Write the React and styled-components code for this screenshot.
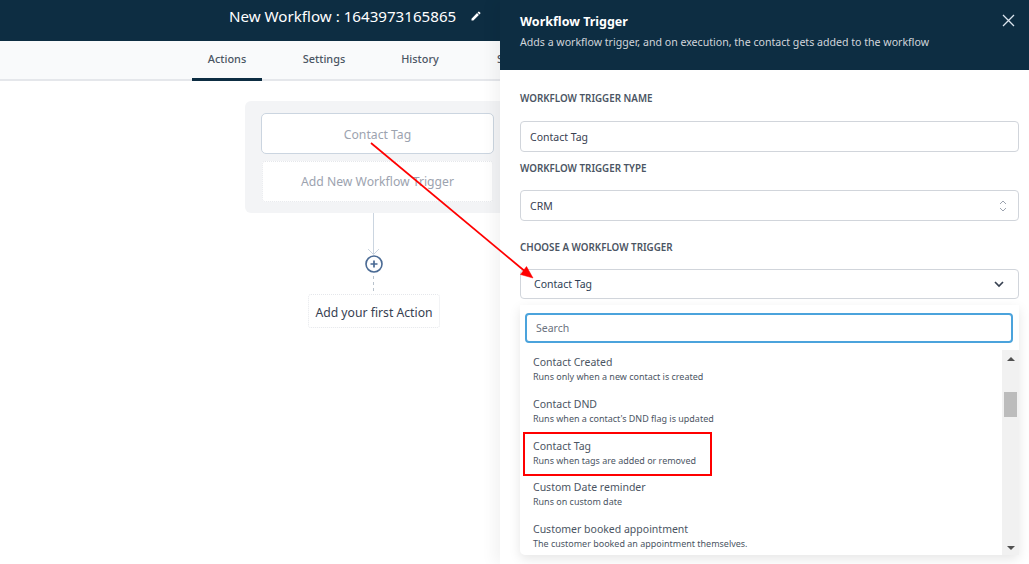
import React from "react";
import styled, { createGlobalStyle } from "styled-components";
import { MdEdit } from "react-icons/md";

const Global = createGlobalStyle`
  html, body { margin: 0; padding: 0; background: #fff; }
  body { font-family: "Noto Sans", "Open Sans", sans-serif; overflow: hidden; }
  * { box-sizing: border-box; }
`;
const Page = styled.div`position: relative; display: flex; width: 1029px; height: 564px; overflow: hidden; background: #fff;`;
const Main = styled.main`width: 500px; flex: none; overflow: hidden; display: flex; flex-direction: column;`;
const TopBar = styled.header`height: 41px; background: #0d2d42; color: #fff; display: flex; align-items: flex-start; padding: 6px 0 0 229px; gap: 14px; font-size: 15.15px; line-height: 20px; white-space: nowrap;`;
const PencilIcon = styled.span`display: flex; padding-top: 4px; font-size: 12px;`;
const Tabs = styled.nav`height: 40px; background: #f9fafb; border-bottom: 2px solid #e5e7eb; display: flex; padding-left: 192px; white-space: nowrap;`;
const Tab = styled.div`
  width: ${p => p.$w}px; flex: none; height: 40px; padding: 10px 0 0 ${p => p.$pl || 0}px; text-align: ${p => p.$pl ? "left" : "center"};
  font-size: 10.9px; line-height: 16px; font-weight: 500; color: #4b5563;
  border-bottom: 3px solid ${p => p.$active ? "#0d2d42" : "transparent"};
`;
const Canvas = styled.section`flex: 1; display: flex; flex-direction: column; padding: 20px 0 0 245px;`;
const TriggerBox = styled.div`width: 275px; height: 112px; flex: none; background: #f3f4f6; border-radius: 6px; padding: 12px 0 0 16px; display: flex; flex-direction: column;`;
const TriggerCard = styled.div`width: 233px; height: 41px; background: #fff; border: 1px solid #cbd5e0; border-radius: 5px; padding-top: 1px; display: flex; align-items: center; justify-content: center; font-size: 12.2px; color: #9ca3af;`;
const AddTrigger = styled.div`width: 231px; height: 41px; margin: 7px 0 0 1px; background: #fff; border: 1px dotted #e5e7eb; border-radius: 3px; display: flex; align-items: center; justify-content: center; font-size: 12.2px; color: #9ca3af;`;
const FlowColumn = styled.div`width: 132px; margin-left: 63px; display: flex; flex-direction: column; align-items: center; flex: none;`;
const Connector = styled.svg`display: block; flex: none;`;
const FirstAction = styled.div`width: 132px; height: 34px; flex: none; padding-top: 2px; border: 1px dotted #e5e7eb; border-radius: 3px; display: flex; align-items: center; justify-content: center; font-size: 12.2px; color: #374151; white-space: nowrap;`;

const Drawer = styled.aside`width: 529px; flex: none; height: 564px; background: #fff; box-shadow: -6px 0 14px rgba(0,0,0,.05); position: relative; z-index: 1;`;
const DrawerHead = styled.header`height: 70px; background: #0d2d42; color: #fff; padding: 13px 20px 0; display: flex; justify-content: space-between;`;
const Title = styled.h2`margin: 0; font-size: 12.5px; line-height: 17px; font-weight: 700;`;
const Sub = styled.p`margin: 5px 0 0; font-size: 10.6px; line-height: 15px; color: #d1d5db; white-space: nowrap;`;
const CloseBtn = styled.svg`display: block; margin: 1px -6px 0 0;`;
const Body = styled.div`padding: 0 10px 0 20px;`;
const Label = styled.div`font-size: 9.8px; line-height: 14px; font-weight: 600; color: #4b5563; white-space: nowrap; padding-top: ${p => p.$top}px; padding-bottom: ${p => p.$bottom}px;`;
const Field = styled.div`height: ${p => p.$h || 31}px; width: 499px; border: 1px solid #d1d5db; border-radius: 4px; display: flex; align-items: center; justify-content: space-between; padding: 0 ${p => p.$pr || 10}px 0 ${p => p.$pl || 9}px; font-size: 10.5px; color: ${p => p.$dark || "#374151"}; background: #fff;`;
const Dropdown = styled.div`width: 499px; height: 250px; margin-top: 6px; background: #fff; border-radius: 0 0 5px 5px; box-shadow: 0 4px 12px rgba(0,0,0,.1); position: relative;`;
const Search = styled.div`position: absolute; left: 5px; top: 8px; width: 488px; height: 30px; border: 2px solid #4ba3dc; border-radius: 4px; padding: 0 9px; display: flex; align-items: center; font-size: 10.5px; color: #6b7280; background: #fff;`;
const List = styled.ul`list-style: none; margin: 0; padding: 50px 0 0 13px;`;
const Item = styled.li`height: ${p => p.$h || 42}px;`;
const ItemTitle = styled.div`font-size: 10.5px; line-height: 15px; color: #4b5563; white-space: nowrap;`;
const ItemDesc = styled.div`font-size: 8.97px; line-height: 14px; color: #4b5563; white-space: nowrap;`;
const Scrollbar = styled.div`position: absolute; right: 0; top: 45px; bottom: 0; width: 17px; background: #f1f1f1; display: flex; flex-direction: column; align-items: center; justify-content: space-between; padding: 7px 0 5px;`;
const Thumb = styled.div`position: absolute; left: 2px; top: 42px; width: 13px; height: 25px; background: #bcbcbc;`;
const ArrowUp = styled.div`width: 0; height: 0; border: 4px solid transparent; border-top: 0; border-bottom: 4px solid #505050;`;
const ArrowDown = styled.div`width: 0; height: 0; border: 4px solid transparent; border-bottom: 0; border-top: 4px solid #505050;`;
const Highlight = styled.div`position: absolute; left: 523px; top: 432px; width: 189px; height: 44px; border: 2px solid #f00; pointer-events: none; z-index: 3;`;
const ArrowOverlay = styled.svg`position: absolute; left: 0; top: 0; pointer-events: none; z-index: 3;`;

const items = [
  ["Contact Created", "Runs only when a new contact is created", 42],
  ["Contact DND", "Runs when a contact's DND flag is updated", 42],
  ["Contact Tag", "Runs when tags are added or removed", 41],
  ["Custom Date reminder", "Runs on custom date", 42],
  ["Customer booked appointment", "The customer booked an appointment themselves.", 40],
];

export default function App() {
  return (
    <Page>
      <Global />
      <Main>
        <TopBar>
          <span>New Workflow : 1643973165865</span>
          <PencilIcon><MdEdit /></PencilIcon>
        </TopBar>
        <Tabs>
          <Tab $w={70} $active>Actions</Tab>
          <Tab $w={124}>Settings</Tab>
          <Tab $w={68}>History</Tab>
          <Tab $w={80} $pl={43}>Stats</Tab>
        </Tabs>
        <Canvas>
          <TriggerBox>
            <TriggerCard>Contact Tag</TriggerCard>
            <AddTrigger>Add New Workflow Trigger</AddTrigger>
          </TriggerBox>
          <FlowColumn>
            <Connector width="20" height="42" viewBox="0 0 20 42">
              <path d="M9.5 0V41" stroke="#cbd5e0" strokeWidth="1" fill="none" />
              <path d="M4 36L9.5 41.5L15 36" stroke="#cbd5e0" strokeWidth="1" fill="none" />
            </Connector>
            <Connector width="20" height="21" viewBox="0 0 20 21">
              <circle cx="10" cy="9" r="8" fill="#fff" stroke="#4a6a94" strokeWidth="1.6" />
              <path d="M10 5.5V12.5M6.5 9H13.5" stroke="#4a6a94" strokeWidth="1.7" />
            </Connector>
            <Connector width="20" height="18" viewBox="0 0 20 18">
              <path d="M9.5 0V18" stroke="#b8c2cc" strokeWidth="1" strokeDasharray="3 3" />
            </Connector>
            <FirstAction>Add your first Action</FirstAction>
          </FlowColumn>
        </Canvas>
      </Main>

      <Drawer>
        <DrawerHead>
          <div>
            <Title>Workflow Trigger</Title>
            <Sub>Adds a workflow trigger, and on execution, the contact gets added to the workflow</Sub>
          </div>
          <CloseBtn width="13" height="13" viewBox="0 0 13 13">
            <path d="M1 1L12 12M12 1L1 12" stroke="#dbe4ee" strokeWidth="1.3" fill="none" />
          </CloseBtn>
        </DrawerHead>
        <Body>
          <Label $top={22} $bottom={15}>WORKFLOW TRIGGER NAME</Label>
          <Field>Contact Tag</Field>
          <Label $top={10} $bottom={14}>WORKFLOW TRIGGER TYPE</Label>
          <Field>
            <span>CRM</span>
            <svg width="10" height="16" viewBox="0 0 10 16">
              <path d="M2 6L5 3L8 6M2 10L5 13L8 10" stroke="#9ca3af" strokeWidth="1" fill="none" />
            </svg>
          </Field>
          <Label $top={20} $bottom={14}>CHOOSE A WORKFLOW TRIGGER</Label>
          <Field $h={30} $pl={13} $pr={13} $dark="#2d3f55">
            <span>Contact Tag</span>
            <svg width="12" height="12" viewBox="0 0 12 12">
              <path d="M2 4L6 8L10 4" stroke="#374151" strokeWidth="1.7" fill="none" />
            </svg>
          </Field>
          <Dropdown>
            <Search>Search</Search>
            <List>
              {items.map(([t, d, h]) => (
                <Item key={t} $h={h}>
                  <ItemTitle>{t}</ItemTitle>
                  <ItemDesc>{d}</ItemDesc>
                </Item>
              ))}
            </List>
            <Scrollbar>
              <ArrowUp />
              <Thumb />
              <ArrowDown />
            </Scrollbar>
          </Dropdown>
        </Body>
      </Drawer>

      <Highlight />
      <ArrowOverlay width="1029" height="564" viewBox="0 0 1029 564">
        <path d="M371 143L524 270.5" stroke="#f00" strokeWidth="1.7" fill="none" />
        <path d="M533 278L520.5 274.5L526.5 266.5Z" fill="#f00" stroke="#f00" strokeWidth=".5" />
      </ArrowOverlay>
    </Page>
  );
}
